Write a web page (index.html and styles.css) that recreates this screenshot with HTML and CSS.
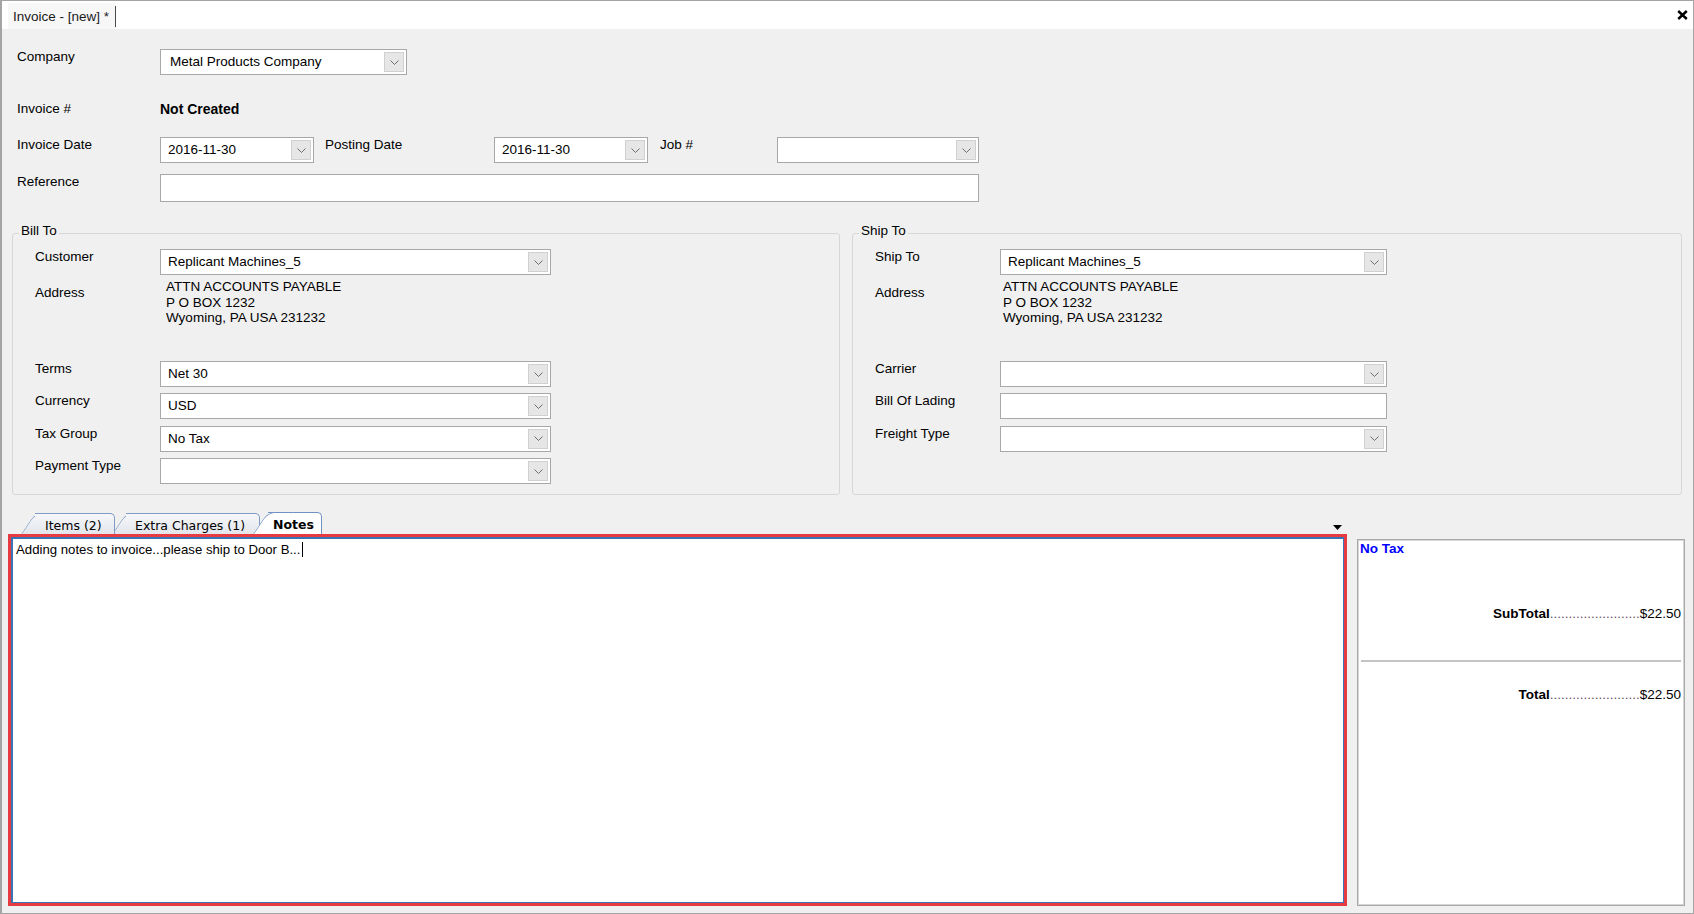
FILE: index.html
```html
<!DOCTYPE html>
<html>
<head>
<meta charset="utf-8">
<title>Invoice - [new] *</title>
<link rel="stylesheet" href="styles.css">
</head>
<body>
<div class="window">
  <div class="titlebar">
    <div class="doc-tab"><span class="doc-tab-text">Invoice - [new] *</span></div>
    <button class="close" aria-label="Close">
      <svg width="11" height="10" viewBox="0 0 11 10"><path d="M1.2 1 L9.8 9 M9.8 1 L1.2 9" stroke="#000" stroke-width="2.4" fill="none"/></svg>
    </button>
  </div>

  <div class="top-form">
    <div class="row">
      <div class="lbl">Company</div>
      <div class="combo w-company"><span class="val val-company">Metal Products Company</span><span class="btn"><svg width="9" height="5" viewBox="0 0 9 5"><path d="M0.5 0.5 L4.5 4.5 L8.5 0.5" fill="none" stroke="#6e6e6e"/></svg></span></div>
    </div>
    <div class="row r-invno">
      <div class="lbl">Invoice #</div>
      <div class="strong">Not Created</div>
    </div>
    <div class="row r-dates">
      <div class="lbl">Invoice Date</div>
      <div class="combo w-date"><span class="val">2016-11-30</span><span class="btn"><svg width="9" height="5" viewBox="0 0 9 5"><path d="M0.5 0.5 L4.5 4.5 L8.5 0.5" fill="none" stroke="#6e6e6e"/></svg></span></div>
      <div class="lbl lbl-post">Posting Date</div>
      <div class="combo w-date"><span class="val">2016-11-30</span><span class="btn"><svg width="9" height="5" viewBox="0 0 9 5"><path d="M0.5 0.5 L4.5 4.5 L8.5 0.5" fill="none" stroke="#6e6e6e"/></svg></span></div>
      <div class="lbl lbl-job">Job #</div>
      <div class="combo w-job"><span class="val"></span><span class="btn"><svg width="9" height="5" viewBox="0 0 9 5"><path d="M0.5 0.5 L4.5 4.5 L8.5 0.5" fill="none" stroke="#6e6e6e"/></svg></span></div>
    </div>
    <div class="row r-ref">
      <div class="lbl">Reference</div>
      <div class="textbox w-ref"></div>
    </div>
  </div>

  <div class="groups">
    <fieldset class="group group-bill">
      <legend>Bill To</legend>
      <div class="group-body">
        <div class="g-row">
          <div class="g-lbl">Customer</div>
          <div class="combo w-bill"><span class="val">Replicant Machines_5</span><span class="btn"><svg width="9" height="5" viewBox="0 0 9 5"><path d="M0.5 0.5 L4.5 4.5 L8.5 0.5" fill="none" stroke="#6e6e6e"/></svg></span></div>
        </div>
        <div class="g-row addr-row">
          <div class="g-lbl">Address</div>
          <div class="addr">ATTN ACCOUNTS PAYABLE<br>P O BOX 1232<br>Wyoming, PA USA 231232</div>
        </div>
        <div class="stack">
          <div class="g-row">
            <div class="g-lbl">Terms</div>
            <div class="combo w-bill"><span class="val">Net 30</span><span class="btn"><svg width="9" height="5" viewBox="0 0 9 5"><path d="M0.5 0.5 L4.5 4.5 L8.5 0.5" fill="none" stroke="#6e6e6e"/></svg></span></div>
          </div>
          <div class="g-row">
            <div class="g-lbl">Currency</div>
            <div class="combo w-bill"><span class="val">USD</span><span class="btn"><svg width="9" height="5" viewBox="0 0 9 5"><path d="M0.5 0.5 L4.5 4.5 L8.5 0.5" fill="none" stroke="#6e6e6e"/></svg></span></div>
          </div>
          <div class="g-row">
            <div class="g-lbl">Tax Group</div>
            <div class="combo w-bill"><span class="val">No Tax</span><span class="btn"><svg width="9" height="5" viewBox="0 0 9 5"><path d="M0.5 0.5 L4.5 4.5 L8.5 0.5" fill="none" stroke="#6e6e6e"/></svg></span></div>
          </div>
          <div class="g-row">
            <div class="g-lbl">Payment Type</div>
            <div class="combo w-bill"><span class="val"></span><span class="btn"><svg width="9" height="5" viewBox="0 0 9 5"><path d="M0.5 0.5 L4.5 4.5 L8.5 0.5" fill="none" stroke="#6e6e6e"/></svg></span></div>
          </div>
        </div>
      </div>
    </fieldset>

    <fieldset class="group group-ship">
      <legend>Ship To</legend>
      <div class="group-body">
        <div class="g-row">
          <div class="g-lbl">Ship To</div>
          <div class="combo w-ship"><span class="val">Replicant Machines_5</span><span class="btn"><svg width="9" height="5" viewBox="0 0 9 5"><path d="M0.5 0.5 L4.5 4.5 L8.5 0.5" fill="none" stroke="#6e6e6e"/></svg></span></div>
        </div>
        <div class="g-row addr-row">
          <div class="g-lbl">Address</div>
          <div class="addr addr-ship">ATTN ACCOUNTS PAYABLE<br>P O BOX 1232<br>Wyoming, PA USA 231232</div>
        </div>
        <div class="stack">
          <div class="g-row">
            <div class="g-lbl">Carrier</div>
            <div class="combo w-ship"><span class="val"></span><span class="btn"><svg width="9" height="5" viewBox="0 0 9 5"><path d="M0.5 0.5 L4.5 4.5 L8.5 0.5" fill="none" stroke="#6e6e6e"/></svg></span></div>
          </div>
          <div class="g-row">
            <div class="g-lbl">Bill Of Lading</div>
            <div class="textbox tb-ship w-ship"></div>
          </div>
          <div class="g-row">
            <div class="g-lbl">Freight Type</div>
            <div class="combo w-ship"><span class="val"></span><span class="btn"><svg width="9" height="5" viewBox="0 0 9 5"><path d="M0.5 0.5 L4.5 4.5 L8.5 0.5" fill="none" stroke="#6e6e6e"/></svg></span></div>
          </div>
        </div>
      </div>
    </fieldset>
  </div>

  <div class="bottom">
    <div class="notes-col">
      <div class="tabs">
        <div class="tab t-items">Items (2)</div>
        <div class="tab t-extra">Extra Charges (1)</div>
        <div class="tab t-notes">Notes</div>
        <span class="tab-menu"><svg width="9" height="5" viewBox="0 0 9 5"><path d="M0 0 H9 L4.5 5 Z" fill="#000"/></svg></span>
      </div>
      <div class="notes">
        <div class="notes-inner">Adding notes to invoice...please ship to Door B...<span class="caret"></span></div>
      </div>
    </div>
    <div class="summary">
      <div class="tax-name">No Tax</div>
      <div class="sum-row sub"><span class="sum-label">SubTotal</span><span class="dots">........................</span><span class="amt">$22.50</span></div>
      <div class="sep"></div>
      <div class="sum-row tot"><span class="sum-label">Total</span><span class="dots">........................</span><span class="amt">$22.50</span></div>
    </div>
  </div>
</div>
</body>
</html>
```

FILE: styles.css
```css
* { box-sizing: border-box; }
html, body { margin: 0; padding: 0; }
body {
  width: 1694px;
  height: 914px;
  overflow: hidden;
  background: #fff;
  font-family: "Liberation Sans", Arial, sans-serif;
  font-size: 13.5px;
  color: #000;
}
.window {
  width: 1694px;
  height: 914px;
  border: 1px solid #a4a4a4;
  border-left: 2px solid #a4a4a4;
  background: #f0f0f0;
  display: flex;
  flex-direction: column;
}

/* title strip */
.titlebar {
  height: 28px;
  flex: none;
  background: #fff;
  display: flex;
  align-items: flex-end;
}
.doc-tab {
  margin-left: 6px;
  height: 26px;
  background: #f7f7f7;
  padding-left: 5px;
  display: flex;
  align-items: center;
}
.doc-tab-text {
  height: 21px;
  line-height: 16px;
  padding: 2px 6px 0 0;
  border-right: 1px solid #4a4a4a;
  display: flex;
  align-items: center;
  color: #1a1a1a;
}
.close {
  margin-left: auto;
  margin-right: 5px;
  align-self: center;
  width: 11px;
  height: 10px;
  border: 0;
  padding: 0;
  background: none;
  display: flex;
}

/* top form */
.top-form { flex: none; padding: 20px 0 0 15px; }
.row { display: flex; align-items: flex-start; }
.lbl { width: 143px; flex: none; line-height: 16px; }
.r-invno { margin-top: 26px; }
.r-dates { margin-top: 20px; }
.r-ref { margin-top: 11px; }
.strong { font-weight: bold; font-size: 14px; line-height: 16px; }
.lbl-post { width: 169px; margin-left: 11px; }
.lbl-job { width: 117px; margin-left: 12px; }

.combo {
  flex: none;
  height: 26px;
  border: 1px solid #a8a8a8;
  background: #fff;
  display: flex;
  align-items: center;
  padding-left: 7px;
}
.combo .val { line-height: 16px; white-space: nowrap; }
.val-company { padding-left: 2px; }
.btn {
  margin-left: auto;
  margin-right: 2px;
  width: 20px;
  height: 20px;
  background: #e6e6e6;
  border: 1px solid #d0d0d0;
  display: flex;
  align-items: center;
  justify-content: center;
}
.textbox {
  flex: none;
  height: 28px;
  border: 1px solid #a8a8a8;
  background: #fff;
}
.tb-ship { height: 26px; }
.w-company { width: 247px; }
.w-date { width: 154px; }
.w-job { width: 202px; }
.w-ref { width: 819px; }
.w-bill { width: 391px; }
.w-ship { width: 387px; }

/* group boxes */
.groups {
  flex: none;
  display: flex;
  gap: 12px;
  margin-top: 21px;
  padding: 0 11px 0 10px;
}
.group {
  min-width: 0;
  margin: 0;
  padding: 0;
  border: 1px solid #d7d7d7;
  border-radius: 3px;
}
.group-bill { flex: none; width: 828px; }
.group-ship { flex: 1; }
.group legend {
  margin-left: 6px;
  padding: 0 2px 4px;
  line-height: 16px;
}
.group-body { padding: 6px 0 10px 22px; }
.g-row { display: flex; align-items: flex-start; }
.g-lbl { width: 125px; flex: none; line-height: 16px; }
.addr-row { margin-top: 4px; }
.addr-row .g-lbl { padding-top: 6px; }
.addr { line-height: 15.7px; padding-left: 6px; }
.addr-ship { padding-left: 3px; }
.stack {
  margin-top: 35px;
  display: flex;
  flex-direction: column;
  gap: 6.33px;
}

/* bottom: tabs, notes, totals */
.bottom {
  flex: none;
  height: 393px;
  margin-top: 18px;
  padding-left: 6px;
  display: flex;
}
.notes-col {
  width: 1339px;
  flex: none;
  display: flex;
  flex-direction: column;
}
.tabs {
  flex: none;
  height: 21px;
  display: flex;
  align-items: flex-end;
  position: relative;
  z-index: 0;
}
.tab {
  position: relative;
  flex: none;
  height: 21px;
  display: flex;
  align-items: center;
  padding-top: 2px;
  font-family: "DejaVu Sans", Verdana, sans-serif;
  font-size: 12.5px;
  color: #000;
  border-top: 1px solid #7f9cc6;
  border-right: 1px solid #7f9cc6;
  border-top-right-radius: 5px;
  background: linear-gradient(#f6f7f9, #e2e6ec);
}
.tab::before {
  content: "";
  position: absolute;
  top: -1px;
  bottom: 0;
  left: -14px;
  width: 24px;
  background: inherit;
  border-top: 1px solid #7f9cc6;
  border-left: 1px solid #7f9cc6;
  border-top-left-radius: 7px;
  transform: skewX(-34deg);
  transform-origin: bottom left;
  z-index: -1;
}
.t-items { margin-left: 27px; width: 80px; padding-left: 10px; }
.t-extra { margin-left: 11px; width: 134px; padding-left: 9px; }
.t-notes {
  margin-left: 8px;
  width: 54px;
  height: 22px;
  padding-left: 5px;
  font-weight: bold;
  background: #fff;
  border-color: #6f92c4;
  z-index: 1;
}
.t-notes::before { border-color: #6f92c4; left: -15px; }
.tab-menu {
  margin-left: auto;
  margin-right: 5px;
  align-self: flex-start;
  margin-top: 12px;
  display: flex;
}
.notes {
  flex: 1;
  border: 3px solid #e63b40;
}
.notes-inner {
  height: 100%;
  border: 1px solid #3a74b5;
  border-top-width: 2px;
  border-left-width: 2px;
  background: #fff;
  padding: 3px 4px 4px 3px;
  font-size: 13.2px;
  line-height: 16px;
}
.caret {
  display: inline-block;
  width: 1px;
  height: 15px;
  background: #000;
  vertical-align: -3px;
  margin-left: 2px;
}

.summary {
  flex: none;
  width: 328px;
  height: 367px;
  margin-top: 26px;
  margin-left: 10px;
  background: #fff;
  border: 1px solid #a9a9a9;
  box-shadow: inset 1px 1px 0 #d6d6d6, inset -1px -1px 0 #d6d6d6;
  padding: 1px 2px 0;
}
.tax-name { color: #0000ff; font-weight: bold; line-height: 16px; }
.sum-row {
  display: flex;
  justify-content: flex-end;
  align-items: baseline;
  line-height: 16px;
  padding-right: 1px;
}
.sub { margin-top: 49px; }
.sep { height: 2px; background: #c4c4c4; margin: 38px 1px 0 1px; }
.tot { margin-top: 25px; }
.sum-label { font-weight: bold; }
.dots {
  width: 90px;
  overflow: hidden;
  white-space: nowrap;
  color: #6a4d6a;
}
```
